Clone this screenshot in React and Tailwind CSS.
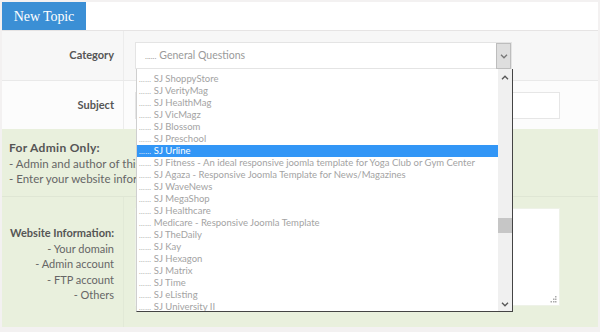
import React from 'react';

const items = [
  'SJ ShoppyStore',
  'SJ VerityMag',
  'SJ HealthMag',
  'SJ VicMagz',
  'SJ Blossom',
  'SJ Preschool',
  'SJ Urline',
  'SJ Fitness - An ideal responsive joomla template for Yoga Club or Gym Center',
  'SJ Agaza - Responsive Joomla Template for News/Magazines',
  'SJ WaveNews',
  'SJ MegaShop',
  'SJ Healthcare',
  'Medicare - Responsive Joomla Template',
  'SJ TheDaily',
  'SJ Kay',
  'SJ Hexagon',
  'SJ Matrix',
  'SJ Time',
  'SJ eListing',
  'SJ University II',
];

const Chevron = ({ up, className }) => (
  <svg width="8" height="5" viewBox="0 0 8 5" className={className}>
    <path d={up ? 'M1 4.2 4 1.2 7 4.2' : 'M1 0.8 4 3.8 7 0.8'} fill="none" stroke="currentColor" strokeWidth="1.3" />
  </svg>
);

export default function App() {
  return (
    <div className="relative w-[600px] h-[332px] overflow-hidden bg-[#f3f1f1] pt-[2px] pl-[2px] pr-[2px] font-['Lato',sans-serif]">
      {/* header */}
      <div className="flex h-[28px] bg-white">
        <div className="w-[84px] bg-[#3b8fd5] text-white font-['Liberation_Serif',serif] text-[14px] tracking-[-0.1px] flex items-center justify-center pt-[1px]">
          New Topic
        </div>
      </div>
      <div className="h-[1px] bg-[#e6e4e4]" />

      {/* category */}
      <div className="flex h-[50px] bg-[#f7f7f7] border-b border-[#e9e9e9]">
        <div className="w-[122px] border-r border-[#ececec] flex items-center justify-end pr-[9px] text-[11px] font-bold text-[#555]">
          Category
        </div>
        <div className="flex items-center pl-[11px]">
          <div className="relative w-[377px] h-[27px] bg-white border border-[#e4e4e4] flex items-center pl-[9px] text-[10.5px] text-[#9a9a9a]">
            <span className="text-[8px] mr-[3px]">......</span>General Questions
            <div className="absolute right-0 top-0 w-[15px] h-[26px] bg-[#dedede] border border-[#bdbdbd] flex items-center justify-center text-[#777]">
              <Chevron />
            </div>
          </div>
        </div>
      </div>

      {/* subject */}
      <div className="flex h-[48px] bg-[#fcfcfc]">
        <div className="w-[122px] border-r border-[#ececec] flex items-center justify-end pr-[9px] text-[11px] font-bold text-[#555]">
          Subject
        </div>
        <div className="flex items-center pl-[11px]">
          <div className="w-[425px] h-[27px] bg-white border border-[#e6e6e6]" />
        </div>
      </div>

      {/* admin note */}
      <div className="h-[68px] bg-[#e9f0dd] border-b border-[#dfe6d4] pl-[7px] pt-[11px] text-[11.5px] leading-[15.5px] text-[#666]">
        <div className="font-bold text-[#555] text-[12px] tracking-[0.3px]">For Admin Only:</div>
        <div>- Admin and author of this post can see this information.</div>
        <div>- Enter your website information here.</div>
      </div>

      {/* website info */}
      <div className="flex h-[130px] bg-[#e9f0dd]">
        <div className="w-[122px] border-r border-[#e2e9d7] flex flex-col items-end pr-[9px] pt-[28px] text-[11px] leading-[15.5px] text-[#666]">
          <div className="font-bold text-[#555]">Website Information:</div>
          <div>- Your domain</div>
          <div>- Admin account</div>
          <div>- FTP account</div>
          <div>- Others</div>
        </div>
        <div className="pl-[11px] pt-[11px]">
          <div className="relative w-[425px] h-[98px] bg-white border border-[#eef2e8]">
            <svg width="7" height="7" viewBox="0 0 7 7" className="absolute right-[2px] bottom-[2px]">
              <g fill="#aaa">
                <rect x="5" y="0" width="1.5" height="1.5" />
                <rect x="3" y="2.5" width="1.5" height="1.5" />
                <rect x="5" y="2.5" width="1.5" height="1.5" />
                <rect x="0.5" y="5" width="1.5" height="1.5" />
                <rect x="3" y="5" width="1.5" height="1.5" />
                <rect x="5" y="5" width="1.5" height="1.5" />
              </g>
            </svg>
          </div>
        </div>
      </div>

      {/* open dropdown list */}
      <div className="absolute left-[136px] top-[69px] w-[377px] h-[243px] bg-white border-l border-[#cfcfcf] border-r border-b border-r-[#444] border-b-[#444] flex">
        <div className="flex-1 pt-[4px] overflow-hidden">
          {items.map((t) => {
            const sel = t === 'SJ Urline';
            return (
              <div
                key={t}
                className={`h-[12px] leading-[12px] pl-[2px] text-[9.5px] whitespace-nowrap ${sel ? 'bg-[#3296f6] text-white' : 'text-[#a3a3a3]'}`}
              >
                <span className="text-[7px] tracking-[0.4px]">......</span> {t}
              </div>
            );
          })}
        </div>
        <div className="relative w-[14px] bg-[#f0f0f0] text-[#555]">
          <div className="absolute top-[6px] left-[3px]"><Chevron up /></div>
          <div className="absolute top-[149px] left-0 w-[14px] h-[15px] bg-[#c6c6c6]" />
          <div className="absolute bottom-[4px] left-[3px]"><Chevron /></div>
        </div>
      </div>
    </div>
  );
}
